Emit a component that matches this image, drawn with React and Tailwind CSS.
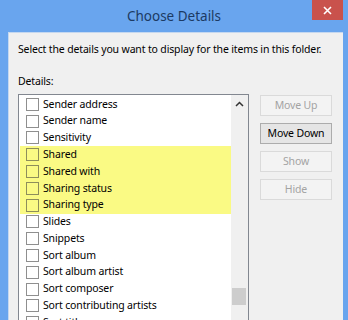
import React from 'react';

const items = [
  { label: 'Sender address' },
  { label: 'Sender name' },
  { label: 'Sensitivity' },
  { label: 'Shared', marked: true },
  { label: 'Shared with', marked: true },
  { label: 'Sharing status', marked: true },
  { label: 'Sharing type', marked: true },
  { label: 'Slides' },
  { label: 'Snippets' },
  { label: 'Sort album' },
  { label: 'Sort album artist' },
  { label: 'Sort composer' },
  { label: 'Sort contributing artists' },
  { label: 'Sort title' },
];

function DetailRow({ label, marked }) {
  return (
    <div className={'flex items-center h-[16.8px] pl-[6px] ' + (marked ? 'bg-[#fafa84]' : '')}>
      <span
        className={
          'w-[13px] h-[13px] border shrink-0 ' +
          (marked ? 'border-[#8e8e5a]' : 'border-[#8f8f8f] bg-white')
        }
      />
      <span className="ml-[4px] text-black whitespace-nowrap">{label}</span>
    </div>
  );
}

function SideButton({ children, enabled }) {
  return (
    <button
      className={
        'w-[72px] h-[21px] border text-center leading-[19px] ' +
        (enabled
          ? 'border-[#acacac] bg-[#e5e5e5] text-black'
          : 'border-[#dadada] bg-[#f3f3f3] text-[#a3a3a3]')
      }
    >
      {children}
    </button>
  );
}

export default function App() {
  return (
    <div
      className="w-[348px] h-[320px] bg-[#69a5ee] flex flex-col overflow-hidden text-[10.5px] tracking-[-0.15px]"
      style={{ fontFamily: '"Noto Sans", "Open Sans", sans-serif' }}
    >
      <div className="relative h-[32px] shrink-0 flex items-center justify-center">
        <span className="text-[13.5px] tracking-normal text-[#1c3a63] pt-[1px]">Choose Details</span>
        <div className="absolute top-0 right-[5px] w-[31px] h-[20px] bg-[#c9524c] flex items-center justify-center">
          <svg width="9" height="9" viewBox="0 0 9 9">
            <path d="M1 1 L8 8 M8 1 L1 8" stroke="#ffffff" strokeWidth="1.6" />
          </svg>
        </div>
      </div>

      <div className="flex-1 ml-[8px] mr-[5px] bg-[#f0f0f0] border-t border-l border-[#c5d8f0] pl-[9px] pt-[8px] min-h-0">
        <div className="text-black leading-[16px]">Select the details you want to display for the items in this folder.</div>
        <div className="mt-[16px] text-black leading-[16px]">Details:</div>

        <div className="mt-[5px] flex gap-[11px]">
          <div className="w-[231px] h-[240px] border border-[#828790] bg-white flex overflow-hidden">
            <div className="flex-1 pt-[1px] pl-[1px]">
              {items.map((it) => (
                <DetailRow key={it.label} {...it} />
              ))}
            </div>
            <div className="w-[17px] bg-[#f0f0f0] flex flex-col items-center relative">
              <svg className="mt-[6px]" width="9" height="6" viewBox="0 0 9 6">
                <path d="M1 5 L4.5 1.5 L8 5" stroke="#333" strokeWidth="1.5" fill="none" />
              </svg>
              <div className="absolute left-[1px] top-[193px] w-[14px] h-[17px] bg-[#cdcdcd]" />
            </div>
          </div>

          <div className="flex flex-col gap-[7px] pt-[1px]">
            <SideButton>Move Up</SideButton>
            <SideButton enabled>Move Down</SideButton>
            <SideButton>Show</SideButton>
            <SideButton>Hide</SideButton>
          </div>
        </div>
      </div>
    </div>
  );
}
